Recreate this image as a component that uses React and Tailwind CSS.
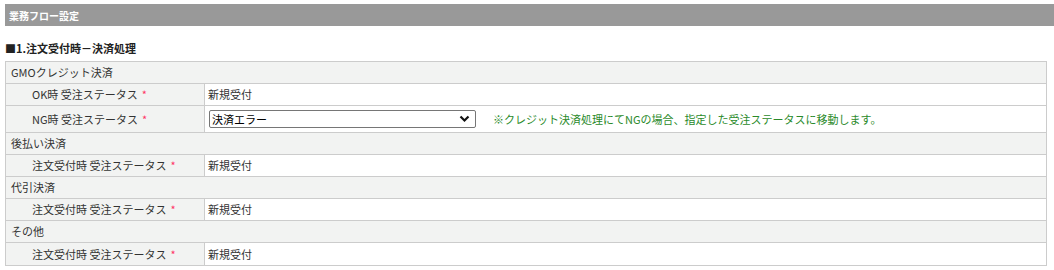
import React from "react";

const font = { fontFamily: '"Noto Sans CJK JP", "Noto Sans", sans-serif' };

function Req() {
  return <span className="ml-[4px] text-[#ff3366]">*</span>;
}

function Section({ children }) {
  return (
    <div className="flex h-[22px] items-center border-b border-[#cccccc] bg-[#f2f3f2] pl-[5px]">
      {children}
    </div>
  );
}

function Row({ label, children, tall, last }) {
  return (
    <div
      className={
        "flex " +
        (tall ? "h-[27px] " : "h-[22px] ") +
        (last ? "" : "border-b border-[#cccccc]")
      }
    >
      <div className="flex w-[199px] shrink-0 items-center border-r border-[#cccccc] bg-[#f2f3f2] pl-[26px]">
        {label}
        <Req />
      </div>
      <div className="flex flex-1 items-center bg-white pl-[3px]">{children}</div>
    </div>
  );
}

export default function App() {
  return (
    <div className="min-h-[270px] bg-white pl-[5px] pt-[4px] text-[11px] text-[#333333]" style={font}>
      <div className="flex h-[22px] items-center bg-[#999999] pl-[4px] text-[10px] font-bold text-white">
        業務フロー設定
      </div>
      <div className="mt-[14px] mb-[5px] flex h-[16px] items-center text-[11px] font-bold text-[#222222]">
        ■1.注文受付時－決済処理
      </div>
      <div className="w-[1042px] border border-[#cccccc]">
        <Section>GMOクレジット決済</Section>
        <Row label="OK時 受注ステータス">新規受付</Row>
        <Row label="NG時 受注ステータス" tall>
          <div className="relative ml-[1px] h-[18px] w-[267px]">
            <select
              className="h-full w-full appearance-none rounded-[2px] border border-[#767676] bg-white pl-[2px] text-[11px] text-black outline-none"
              style={font}
              defaultValue="err"
            >
              <option value="err">決済エラー</option>
              <option value="new">新規受付</option>
            </select>
            <svg
              className="pointer-events-none absolute right-[6px] top-[5px]"
              width="11"
              height="8"
              viewBox="0 0 11 8"
            >
              <path d="M1.5 1.5 L5.5 5.5 L9.5 1.5" fill="none" stroke="#111" strokeWidth="2.2" />
            </svg>
          </div>
          <span className="ml-[17px] text-[#2a8a2a]">
            ※クレジット決済処理にてNGの場合、指定した受注ステータスに移動します。
          </span>
        </Row>
        <Section>後払い決済</Section>
        <Row label="注文受付時 受注ステータス">新規受付</Row>
        <Section>代引決済</Section>
        <Row label="注文受付時 受注ステータス">新規受付</Row>
        <Section>その他</Section>
        <Row label="注文受付時 受注ステータス" last>
          新規受付
        </Row>
      </div>
    </div>
  );
}
